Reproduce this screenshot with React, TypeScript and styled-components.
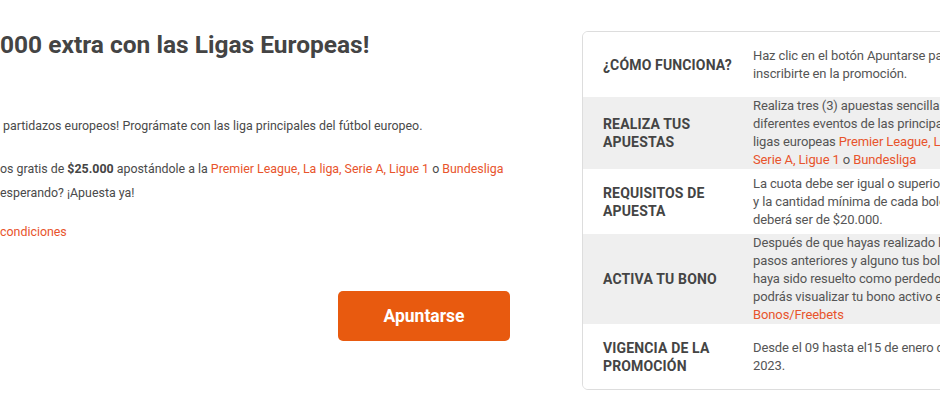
import React from 'react';
import styled, { createGlobalStyle } from 'styled-components';

const GlobalStyle = createGlobalStyle`
  html, body {
    margin: 0;
    padding: 0;
    background: #ffffff;
    overflow: hidden;
  }
  body {
    font-family: Roboto, "Liberation Sans", Arial, sans-serif;
    color: #444444;
  }
`;

const Page = styled.div`
  display: flex;
  align-items: flex-start;
  width: 940px;
  height: 400px;
  overflow: hidden;
`;

const Intro = styled.div`
  flex: 0 0 510px;
  min-width: 0;
  padding-top: 30px;
`;

const Title = styled.h1`
  margin: 0 0 54px 0;
  font-size: 24.5px;
  line-height: 30px;
  font-weight: 700;
  color: #444444;
  white-space: nowrap;
`;

const Paragraph = styled.p<{ $indent?: number; $gap?: number }>`
  margin: 0 0 ${(p) => p.$gap ?? 16}px 0;
  padding-left: ${(p) => p.$indent ?? 0}px;
  font-size: 12.4px;
  line-height: 24px;
  color: #4a4a4a;
  white-space: nowrap;

  strong {
    font-weight: 700;
    color: #444444;
  }
`;

const Link = styled.span`
  color: #e8542c;
`;

const ButtonRow = styled.div`
  display: flex;
  justify-content: flex-end;
  padding-top: 31px;
`;

const JoinButton = styled.button`
  width: 172px;
  height: 50px;
  border: none;
  border-radius: 5px;
  background: #e85a0f;
  color: #ffffff;
  font-family: Roboto, "Liberation Sans", Arial, sans-serif;
  font-size: 17.5px;
  font-weight: 700;
  cursor: pointer;
`;

const Card = styled.div`
  flex: 0 0 440px;
  margin-left: 72px;
  margin-top: 31px;
  border: 1px solid #dddddd;
  border-radius: 6px;
  overflow: hidden;
`;

const Row = styled.div<{ $shaded?: boolean }>`
  display: flex;
  align-items: center;
  min-height: 65px;
  background: ${(p) => (p.$shaded ? '#efefef' : '#ffffff')};
`;

const Label = styled.div`
  flex: 0 0 150px;
  padding-left: 20px;
  font-size: 14px;
  line-height: 18px;
  font-weight: 700;
  letter-spacing: 0.15px;
  color: #444444;
`;

const Description = styled.div`
  flex: 1;
  font-size: 13px;
  line-height: 18px;
  letter-spacing: -0.12px;
  color: #555555;
  white-space: nowrap;
`;

interface Step {
  label: string[];
  lines: React.ReactNode[];
  shaded?: boolean;
}

const steps: Step[] = [
  {
    label: ['¿CÓMO FUNCIONA?'],
    lines: ['Haz clic en el botón Apuntarse para', 'inscribirte en la promoción.'],
  },
  {
    label: ['REALIZA TUS', 'APUESTAS'],
    shaded: true,
    lines: [
      'Realiza tres (3) apuestas sencillas en',
      'diferentes eventos de las principales',
      <>ligas europeas <Link>Premier League, La liga,</Link></>,
      <><Link>Serie A, Ligue 1</Link> o <Link>Bundesliga</Link></>,
    ],
  },
  {
    label: ['REQUISITOS DE', 'APUESTA'],
    lines: [
      'La cuota debe ser igual o superior a 1.5',
      'y la cantidad mínima de cada boleto',
      'deberá ser de $20.000.',
    ],
  },
  {
    label: ['ACTIVA TU BONO'],
    shaded: true,
    lines: [
      'Después de que hayas realizado los',
      'pasos anteriores y alguno tus boletos',
      'haya sido resuelto como perdedor,',
      'podrás visualizar tu bono activo en',
      <Link>Bonos/Freebets</Link>,
    ],
  },
  {
    label: ['VIGENCIA DE LA', 'PROMOCIÓN'],
    lines: ['Desde el 09 hasta el15 de enero de', '2023.'],
  },
];

const App: React.FC = () => {
  return (
    <>
      <GlobalStyle />
      <Page>
        <Intro>
          <Title>000 extra con las Ligas Europeas!</Title>
          <Paragraph $indent={3} $gap={19}>
            partidazos europeos! Prográmate con las liga principales del fútbol europeo.
          </Paragraph>
          <Paragraph $gap={15}>
            os gratis de <strong>$25.000</strong> apostándole a la{' '}
            <Link>Premier League, La liga, Serie A, Ligue 1</Link> o <Link>Bundesliga</Link>
            <br />
            esperando? ¡Apuesta ya!
          </Paragraph>
          <Paragraph>
            <Link>condiciones</Link>
          </Paragraph>
          <ButtonRow>
            <JoinButton>Apuntarse</JoinButton>
          </ButtonRow>
        </Intro>
        <Card>
          {steps.map((step, i) => (
            <Row key={i} $shaded={step.shaded}>
              <Label>
                {step.label.map((l, j) => (
                  <div key={j}>{l}</div>
                ))}
              </Label>
              <Description>
                {step.lines.map((l, j) => (
                  <div key={j}>{l}</div>
                ))}
              </Description>
            </Row>
          ))}
        </Card>
      </Page>
    </>
  );
};

export default App;
